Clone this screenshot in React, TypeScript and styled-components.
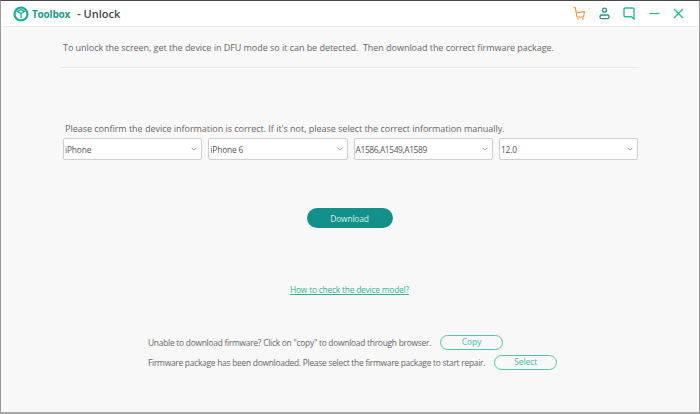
import React from "react";
import styled, { createGlobalStyle } from "styled-components";

const Global = createGlobalStyle`
  html, body { margin: 0; padding: 0; background: #f8f8f8; }
  body { font-family: "Open Sans", "Noto Sans", sans-serif; }
`;

const Window = styled.div`
  box-sizing: border-box;
  width: 700px;
  height: 414px;
  display: flex;
  flex-direction: column;
  background: #f8f8f8;
  border-top: 1px solid #4a4a4a;
  border-left: 1px solid #9a9a9a;
  border-right: 1px solid #9a9a9a;
  border-bottom: 2px solid #a8a8a8;
  overflow: hidden;
`;

const TitleBar = styled.header`
  flex: none;
  height: 25px;
  display: flex;
  align-items: center;
  background: #fff;
  border-bottom: 1px solid #ececec;
  padding: 0 15px 0 12px;
`;

const Brand = styled.span`
  margin-left: 3px;
  font-size: 10px;
  font-weight: 700;
  letter-spacing: -0.2px;
  color: #1b9a8a;
`;

const PageTitle = styled.span`
  margin-left: 7px;
  font-size: 11px;
  font-weight: 600;
  color: #444;
`;

const Actions = styled.div`
  margin-left: auto;
  display: flex;
  align-items: center;
  gap: 13.5px;
`;

const Content = styled.main`
  flex: 1;
  display: flex;
  flex-direction: column;
  padding: 0 60px 0 59px;
`;

const Intro = styled.p`
  margin: 0;
  padding: 14px 0 13px 3px;
  font-size: 9px;
  letter-spacing: -0.04px;
  line-height: 13px;
  color: #666;
  border-bottom: 1px solid #e8e8e8;
  width: 576px;
`;

const Confirm = styled.p`
  margin: 54px 0 0 5px;
  font-size: 9px;
  letter-spacing: -0.027px;
  line-height: 13px;
  color: #666;
`;

const SelectRow = styled.div`
  display: flex;
  gap: 6px;
  margin: 3px 0 0 3px;
`;

const SelectBox = styled.div<{ $compact: boolean }>`
  box-sizing: border-box;
  width: 139.3px;
  height: 22px;
  display: flex;
  align-items: center;
  justify-content: space-between;
  padding: 0 4px 0 1px;
  background: #fff;
  border: 1px solid #cfcfcf;
  border-radius: 2px;
  font-size: 8.4px;
  letter-spacing: ${(p) => (p.$compact ? "-0.38px" : "-0.15px")};
  color: #555;
`;

const DownloadButton = styled.button`
  align-self: center;
  margin: 48px 0 0 1px;
  width: 86.5px;
  height: 20px;
  border: none;
  border-radius: 10px;
  background: #14908a;
  color: #d4efe9;
  font-family: inherit;
  font-size: 8.4px;
  letter-spacing: -0.15px;
  padding: 0 1px 0 0;
`;

const HelpLink = styled.a`
  align-self: center;
  margin-top: 55px;
  font-size: 8.4px;
  letter-spacing: -0.2px;
  line-height: 13px;
  color: #2fb592;
  text-decoration: underline;
`;

const Footer = styled.div`
  display: flex;
  flex-direction: column;
  gap: 5px;
  margin: 39px 0 0 88px;
`;

const FooterRow = styled.div`
  display: flex;
  align-items: center;
  height: 15px;
  font-size: 8.4px;
  letter-spacing: -0.245px;
  color: #666;
`;

const OutlineButton = styled.button`
  box-sizing: border-box;
  margin-left: 9px;
  width: 63px;
  height: 15px;
  border: 1px solid #4fc6a5;
  border-radius: 8px;
  background: transparent;
  color: #3dbd98;
  font-family: inherit;
  font-size: 8.4px;
  line-height: 10px;
  padding: 0 0 2px;
`;

const Chevron = () => (
  <svg width="6" height="4" viewBox="0 0 6 4" fill="none">
    <path d="M0.5 0.7 L3 3.2 L5.5 0.7" stroke="#888" strokeWidth="0.8" />
  </svg>
);

const Logo = () => (
  <svg width="16" height="16" viewBox="0 0 16 16" fill="none">
    <circle cx="8" cy="8" r="6.5" stroke="#14b095" strokeWidth="2.2" />
    <path d="M4.4 5.4 L8 7.6 L11.6 5.4 L8 3.6 Z M8 7.6 V12" stroke="#14b095" strokeWidth="1.3" />
  </svg>
);

const Cart = () => (
  <svg width="12" height="13" viewBox="0 0 12 13" fill="none" stroke="#ee9135" strokeWidth="1.1">
    <path d="M0.3 0.8 H2.4 L4 10 H10.6 L11.4 4.6 L4.2 5.6" />
    <circle cx="5" cy="11.9" r="0.8" fill="#ee9135" stroke="none" />
    <circle cx="9.8" cy="11.9" r="0.8" fill="#ee9135" stroke="none" />
  </svg>
);

const User = () => (
  <svg width="11" height="13" viewBox="0 0 11 13" fill="none" stroke="#2b8f8a" strokeWidth="1.3">
    <circle cx="5.5" cy="3.2" r="2" />
    <rect x="1" y="8" width="9" height="3.6" rx="1.4" />
  </svg>
);

const Chat = () => (
  <svg width="12" height="13" viewBox="0 0 12 13" fill="none" stroke="#25c08f" strokeWidth="1.4">
    <path d="M2.4 1 H9.6 C10.5 1 11 1.5 11 2.4 V12 L8.4 9.8 H2.4 C1.5 9.8 1 9.3 1 8.4 V2.4 C1 1.5 1.5 1 2.4 1 Z" />
  </svg>
);

const Minimize = () => (
  <svg width="11" height="13" viewBox="0 0 11 13" fill="none" stroke="#25c08f" strokeWidth="1.3">
    <path d="M0.5 6.5 H10.5" />
  </svg>
);

const Close = () => (
  <svg width="11" height="13" viewBox="0 0 11 13" fill="none" stroke="#25c08f" strokeWidth="1.4">
    <path d="M1 2 L10 11 M10 2 L1 11" />
  </svg>
);

const selects = ["iPhone", "iPhone 6", "A1586,A1549,A1589", "12.0"];

export default function App() {
  return (
    <>
      <Global />
      <Window>
        <TitleBar>
          <Logo />
          <Brand>Toolbox</Brand>
          <PageTitle>- Unlock</PageTitle>
          <Actions>
            <Cart />
            <User />
            <Chat />
            <Minimize />
            <Close />
          </Actions>
        </TitleBar>
        <Content>
          <Intro>
            To unlock the screen, get the device in DFU mode so it can be detected.&nbsp; Then download the correct firmware package.
          </Intro>
          <Confirm>
            Please confirm the device information is correct. If it's not, please select the correct information manually.
          </Confirm>
          <SelectRow>
            {selects.map((s) => (
              <SelectBox key={s} $compact={s.length > 10}>
                {s}
                <Chevron />
              </SelectBox>
            ))}
          </SelectRow>
          <DownloadButton>Download</DownloadButton>
          <HelpLink>How to check the device model?</HelpLink>
          <Footer>
            <FooterRow>
              Unable to download firmware? Click on "copy" to download through browser.
              <OutlineButton>Copy</OutlineButton>
            </FooterRow>
            <FooterRow>
              Firmware package has been downloaded. Please select the firmware package to start repair.
              <OutlineButton>Select</OutlineButton>
            </FooterRow>
          </Footer>
        </Content>
      </Window>
    </>
  );
}
